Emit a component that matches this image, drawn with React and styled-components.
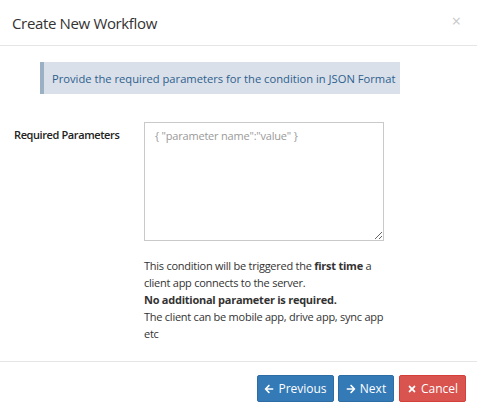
import React from "react";
import styled, { createGlobalStyle } from "styled-components";
import { FaArrowLeft, FaArrowRight, FaTimes } from "react-icons/fa";

const Global = createGlobalStyle`
  html, body { margin: 0; padding: 0; background: #fff; }
  body { font-family: "Open Sans", "Noto Sans", sans-serif; color: #333; }
  * { box-sizing: border-box; }
`;

const Modal = styled.div`
  width: 477px;
  height: 414px;
  background: #fff;
  display: flex;
  flex-direction: column;
`;

const Header = styled.div`
  height: 46px;
  padding: 0 12px;
  display: flex;
  align-items: center;
  justify-content: space-between;
  border-bottom: 1px solid #e5e5e5;
`;

const Title = styled.h4`
  margin: 0;
  font-size: 15px;
  font-weight: 400;
  color: #333;
  letter-spacing: -0.35px;
`;

const Close = styled.span`
  font-size: 16px;
  color: #c8c8c8;
  margin-right: 4px;
  margin-top: -4px;
  line-height: 1;
`;

const Body = styled.div`
  flex: 1;
  padding: 16px 14px 0;
  display: flex;
  flex-direction: column;
`;

const Alert = styled.div`
  margin-left: 26px;
  width: 360px;
  height: 32px;
  background: #d9e0ea;
  border-left: 4px solid #9cb0c3;
  color: #2e5f8c;
  font-size: 11.2px;
  display: flex;
  align-items: center;
  padding-left: 8px;
  white-space: nowrap;
`;

const FormRow = styled.div`
  margin-top: 28px;
  display: grid;
  grid-template-columns: 130px 240px;
`;

const Label = styled.label`
  font-size: 11px;
  font-weight: 600;
  color: #222;
  letter-spacing: -0.4px;
  padding-top: 5px;
`;

const TextArea = styled.textarea`
  width: 240px;
  height: 119px;
  border: 1px solid #c9c9c9;
  border-radius: 0;
  padding: 5px 10px;
  font-family: inherit;
  font-size: 11px;
  letter-spacing: -0.2px;
  color: #333;
  resize: vertical;
  &::placeholder { color: #9a9a9a; }
`;

const Help = styled.p`
  grid-column: 2;
  margin: 16px 0 0;
  font-size: 11px;
  letter-spacing: -0.25px;
  line-height: 17px;
  color: #333;
`;

const Strong = styled.strong`
  font-weight: 700;
`;

const Footer = styled.div`
  height: 53px;
  border-top: 1px solid #e5e5e5;
  display: flex;
  justify-content: flex-end;
  align-items: flex-start;
  padding: 13px 11px 0 0;
  gap: 4px;
`;

const Button = styled.button`
  height: 27px;
  width: ${(p) => p.$w}px;
  border: 1px solid ${(p) => (p.$danger ? "#d43f3a" : "#2e6da4")};
  background: ${(p) => (p.$danger ? "#d9534f" : "#337ab7")};
  color: #fff;
  border-radius: 2px;
  font-family: inherit;
  font-size: 12px;
  display: flex;
  align-items: center;
  justify-content: center;
  gap: 4px;
  padding: 0;
  margin-left: ${(p) => p.$ml || 0}px;
  svg { width: 10px; height: 10px; }
`;

export default function App() {
  return (
    <>
      <Global />
      <Modal>
        <Header>
          <Title>Create New Workflow</Title>
          <Close>×</Close>
        </Header>
        <Body>
          <Alert>Provide the required parameters for the condition in JSON Format</Alert>
          <FormRow>
            <Label>Required Parameters</Label>
            <TextArea placeholder={'{ "parameter name":"value" }'} />
            <Help>
              This condition will be triggered the <Strong>first time</Strong> a client app connects to the server.
              <br />
              <Strong>No additional parameter is required.</Strong>
              <br />
              The client can be mobile app, drive app, sync app etc
            </Help>
          </FormRow>
        </Body>
        <Footer>
          <Button $w={77}><FaArrowLeft />Previous</Button>
          <Button $w={56}><FaArrowRight />Next</Button>
          <Button $w={67} $danger $ml={1}><FaTimes />Cancel</Button>
        </Footer>
      </Modal>
    </>
  );
}
